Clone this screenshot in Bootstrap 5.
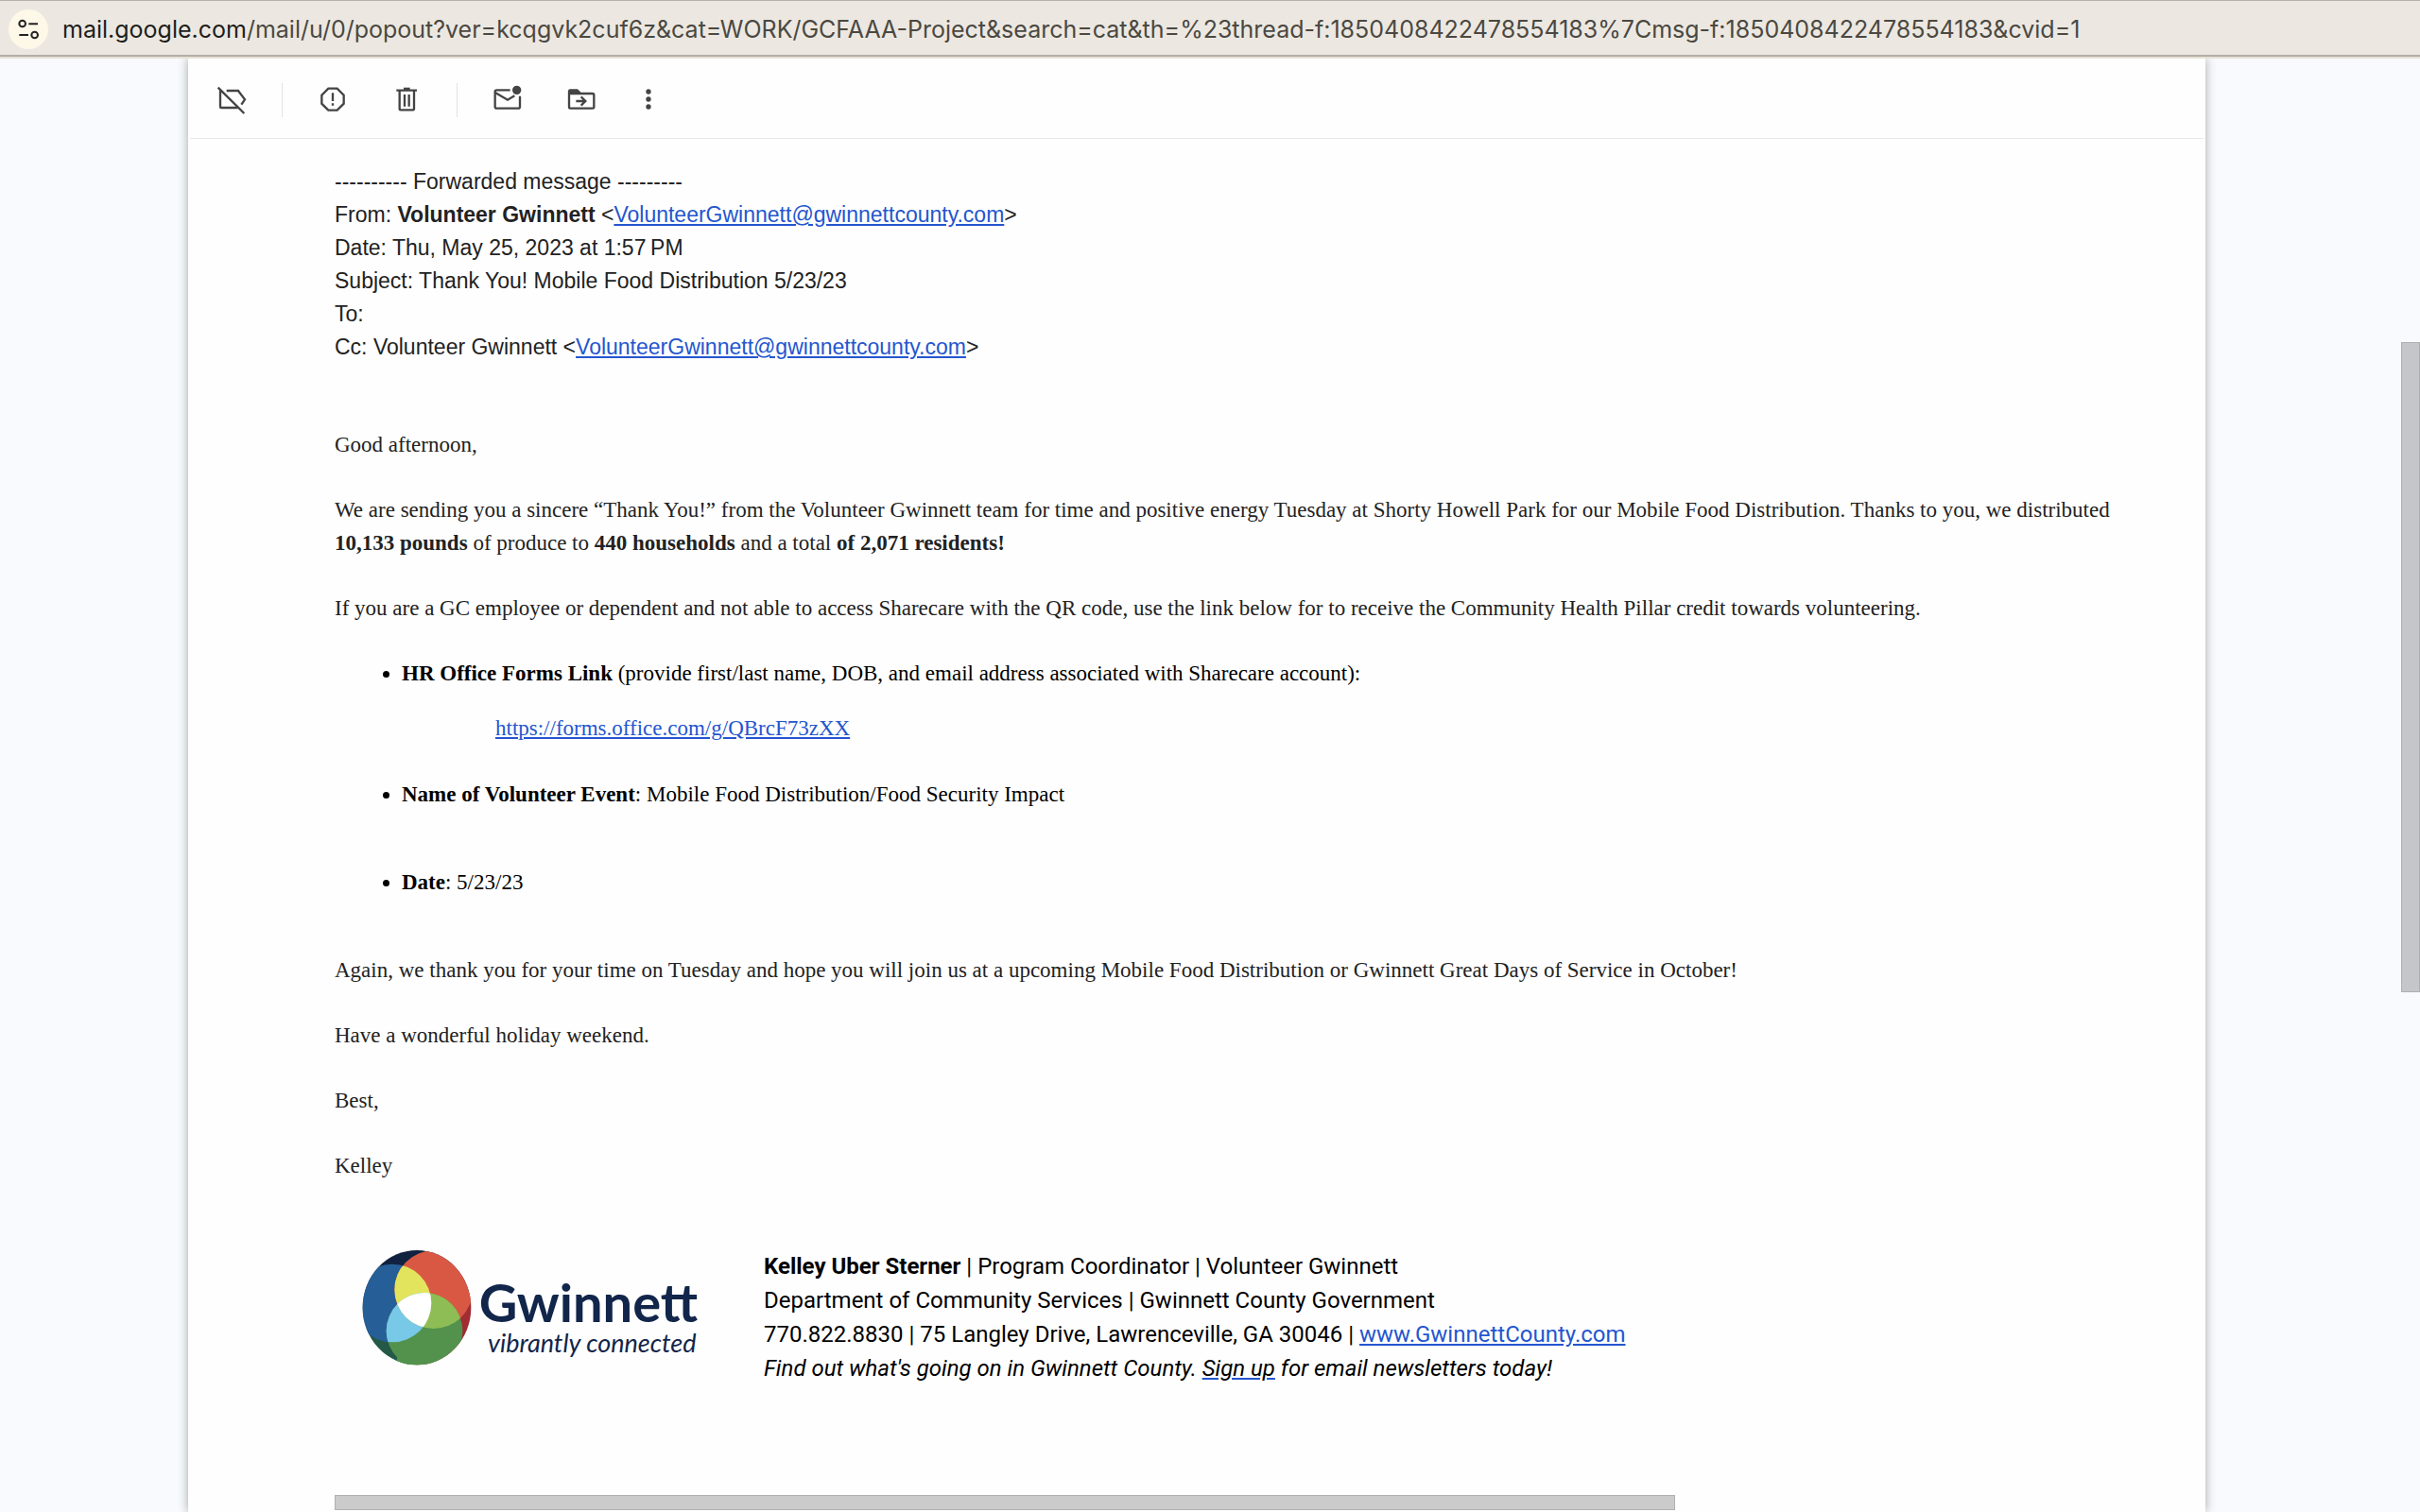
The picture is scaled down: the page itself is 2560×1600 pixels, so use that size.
<!DOCTYPE html>
<html lang="en">
<head>
<meta charset="utf-8">
<meta name="viewport" content="width=device-width, initial-scale=1">
<title>Thank You! Mobile Food Distribution 5/23/23</title>
<link rel="stylesheet" href="https://cdn.jsdelivr.net/npm/bootstrap@5.3.0/dist/css/bootstrap.min.css">
<style>
  html { overflow: hidden; }
  body { background: #f8fafd; color: #222; }
  .url-bar { z-index: 1; height: 62px; background: #ece8e1; border-top: 1px solid #b5b0a8; border-bottom: 2px solid #e8e2d5; box-shadow: inset 0 -2px #b3aea6; padding-left: 9px; gap: 15px; }
  .site-btn { width: 42px; height: 42px; background: #fdf8e8; }
  .url-text { font: 25px/36px Inter, sans-serif; color: #4b4842; }
  .url-text span { color: #1f1e1b; }
  .popout { margin: 0 227px 0 199px; background: #fefefe; box-shadow: 0 0 10px rgba(60,64,67,.45); }
  .tools { height: 85px; margin: 0 2px; padding: 3px 0 0 28px; gap: 37px; border-bottom: 1px solid #e9e9e9; }
  .tool-group { gap: 46px; }
  .tool-group svg { height: 32px; fill: none; stroke: #444; stroke-width: 7; }
  .tool-group .solid { fill: #444; stroke: none; }
  .rule-v { width: 1px; height: 36px; background: #e2e2e2; }
  .message { padding: 28px 48px 0 155px; }
  .message a { color: #2456cf; }
  .headers { font: 23px/35px "Liberation Sans", sans-serif; margin-bottom: 68px; }
  .letter { font: 23px/35px "Liberation Serif", serif; }
  .letter p { margin-bottom: 34px; }
  .letter ul { color: #000; padding-left: 71px; margin: 0; }
  .letter li { margin-bottom: 58px; }
  .letter li p { margin: 23px 0 -23px 99px; }
  .signature { font: 24px/36px Roboto, sans-serif; color: #000; gap: 65px; padding: 37px 0 0 29px; margin-bottom: 116px; }
  .message .signup { color: #000; text-decoration-color: #2456cf; }
  .logo-text { font-family: Lato, sans-serif; fill: #12254a; }
  .scroll-thumb { top: 362px; right: 0; width: 20px; height: 688px; background: #c5c6c9; border: 1px solid #aeafb1; }
  .quote-bar { max-width: 1418px; height: 16px; background: #cbcbcb; border: 1px solid #b0b0b0; }
</style>
</head>
<body class="min-vh-100 d-flex flex-column position-relative">
<header class="url-bar d-flex align-items-center position-relative">
  <button class="site-btn btn p-0 border-0 rounded-circle d-flex" aria-label="Site information">
    <svg width="42" height="42" viewBox="27 27 126 126" fill="none" stroke="#222" stroke-width="6"><circle cx="71" cy="72" r="10"/><circle cx="110" cy="108" r="10"/><path d="M91 73h29M61 108h29"/></svg>
  </button>
  <div class="url-text text-nowrap"><span>mail.google.com</span>/mail/u/0/popout?ver=kcqgvk2cuf6z&amp;cat=WORK/GCFAAA-Project&amp;search=cat&amp;th=%23thread-f:1850408422478554183%7Cmsg-f:1850408422478554183&amp;cvid=1</div>
</header>
<main class="popout flex-grow-1">
  <div class="tools d-flex align-items-center">
    <div class="tool-group d-flex">
      <button class="btn p-0 border-0 d-flex" aria-label="Remove label"><svg width="32" viewBox="57 29 96 96"><path d="M62 37L145 119M69 46V97Q69 101 73 101H124M89 47H126L147 75L136 91"/></svg></button>
    </div>
    <div class="rule-v"></div>
    <div class="tool-group d-flex">
      <button class="btn p-0 border-0 d-flex" aria-label="Report spam"><svg width="32" viewBox="378 29 96 96"><path d="M412 40H440L461 61V88L440 109H412L391 88V61ZM426 54V80M426 87V94"/></svg></button>
      <button class="btn p-0 border-0 d-flex" aria-label="Delete"><svg width="32" viewBox="612 29 96 96"><path d="M638 49V104Q638 108 642 108H680Q684 108 684 104V49M628 46H693M654 59V97M668 59V97"/><path class="solid" d="M651 37H671V46H651Z"/></svg></button>
    </div>
    <div class="rule-v"></div>
    <div class="tool-group d-flex">
      <button class="btn p-0 border-0 d-flex" aria-label="Mark as unread"><svg width="32" viewBox="153 29 96 96"><path d="M209 45H166Q161 45 161 50V98Q161 103 166 103H235Q240 103 240 98V64M163 54L201 76L223 63"/><circle class="solid" cx="230" cy="45" r="14"/></svg></button>
      <button class="btn p-0 border-0 d-flex" aria-label="Move to"><svg width="32" viewBox="387 29 96 96"><path d="M396 48V99Q396 103 400 103H470Q475 103 475 99V61Q475 56 470 56H396M418 80H447M434 66L448 80L434 94"/><path class="solid" d="M393 57V48Q393 42 399 42H423L435 54V57Z"/></svg></button>
      <button class="btn p-0 border-0 d-flex" aria-label="More"><svg width="18" viewBox="621 29 54 96"><g class="solid"><circle cx="648" cy="50" r="8"/><circle cx="648" cy="74" r="8"/><circle cx="648" cy="98" r="8"/></g></svg></button>
    </div>
  </div>
  <article class="message">
    <div class="headers">
      <div>---------- Forwarded message ---------</div>
      <div>From: <b>Volunteer Gwinnett</b> &lt;<a href="#">VolunteerGwinnett@gwinnettcounty.com</a>&gt;</div>
      <div>Date: Thu, May 25, 2023 at 1:57&#8239;PM</div>
      <div>Subject: Thank You! Mobile Food Distribution 5/23/23</div>
      <div>To:</div>
      <div>Cc: Volunteer Gwinnett &lt;<a href="#">VolunteerGwinnett@gwinnettcounty.com</a>&gt;</div>
    </div>
    <div class="letter">
      <p>Good afternoon,</p>
      <p>We are sending you a sincere “Thank You!” from the Volunteer Gwinnett team for time and positive energy Tuesday at Shorty Howell Park for our Mobile Food Distribution. Thanks to you, we distributed <b>10,133 pounds</b> of produce to <b>440 households</b> and a total <b>of 2,071 residents!</b></p>
      <p>If you are a GC employee or dependent and not able to access Sharecare with the QR code, use the link below for to receive the Community Health Pillar credit towards volunteering.</p>
      <ul>
        <li><b>HR Office Forms Link</b> (provide first/last name, DOB, and email address associated with Sharecare account):
          <p><a href="#">https://forms.office.com/g/QBrcF73zXX</a></p></li>
        <li><b>Name of Volunteer Event</b>: Mobile Food Distribution/Food Security Impact</li>
        <li><b>Date</b>: 5/23/23</li>
      </ul>
      <p>Again, we thank you for your time on Tuesday and hope you will join us at a upcoming Mobile Food Distribution or Gwinnett Great Days of Service in October!</p>
      <p>Have a wonderful holiday weekend.</p>
      <p>Best,</p>
      <p>Kelley</p>
    </div>
    <div class="signature d-flex align-items-start">
      <svg class="flex-shrink-0" width="360" height="126" viewBox="129 96 1080 378" role="img" aria-label="Gwinnett, vibrantly connected">
        <defs>
          <clipPath id="globe"><ellipse cx="303" cy="281" rx="172" ry="182"/></clipPath>
          <clipPath id="blue"><circle cx="225" cy="267" r="124"/></clipPath>
          <clipPath id="red"><circle cx="356" cy="224" r="124"/></clipPath>
        </defs>
        <g clip-path="url(#globe)">
          <path fill="#10223f" d="M120 90H490V240H120Z"/>
          <path fill="#a02d32" d="M300 240H490V480H300Z"/>
          <path fill="#245847" d="M120 240H300V480H120Z"/>
          <circle cx="225" cy="267" r="124" fill="#265f98"/>
          <circle cx="356" cy="224" r="124" fill="#d95843"/>
          <circle cx="327" cy="355" r="121" fill="#52924c"/>
          <path fill="#52924c" d="M240 420H400V470H240Z"/>
          <g clip-path="url(#blue)">
            <circle cx="356" cy="224" r="124" fill="#e2e45d"/>
            <circle cx="327" cy="355" r="121" fill="#78c8e7"/>
          </g>
          <g clip-path="url(#red)">
            <circle cx="327" cy="355" r="121" fill="#8fbd55"/>
            <g clip-path="url(#blue)"><circle cx="327" cy="355" r="121" fill="#fff"/></g>
          </g>
        </g>
        <text class="logo-text" x="500" y="328" font-size="168" font-weight="700">Gwinnett</text>
        <text class="logo-text" x="528" y="422" font-size="81" font-style="italic">vibrantly connected</text>
      </svg>
      <div>
        <div><b>Kelley Uber Sterner</b> | Program Coordinator | Volunteer Gwinnett</div>
        <div>Department of Community Services | Gwinnett County Government</div>
        <div>770.822.8830 | 75 Langley Drive, Lawrenceville, GA 30046 | <a href="#">www.GwinnettCounty.com</a></div>
        <div><i>Find out what's going on in Gwinnett County. <a class="signup" href="#">Sign up</a> for email newsletters today!</i></div>
      </div>
    </div>
    <div class="quote-bar"></div>
  </article>
</main>
<div class="scroll-thumb position-absolute"></div>
<script src="https://cdn.jsdelivr.net/npm/bootstrap@5.3.0/dist/js/bootstrap.bundle.min.js"></script>
</body>
</html>
